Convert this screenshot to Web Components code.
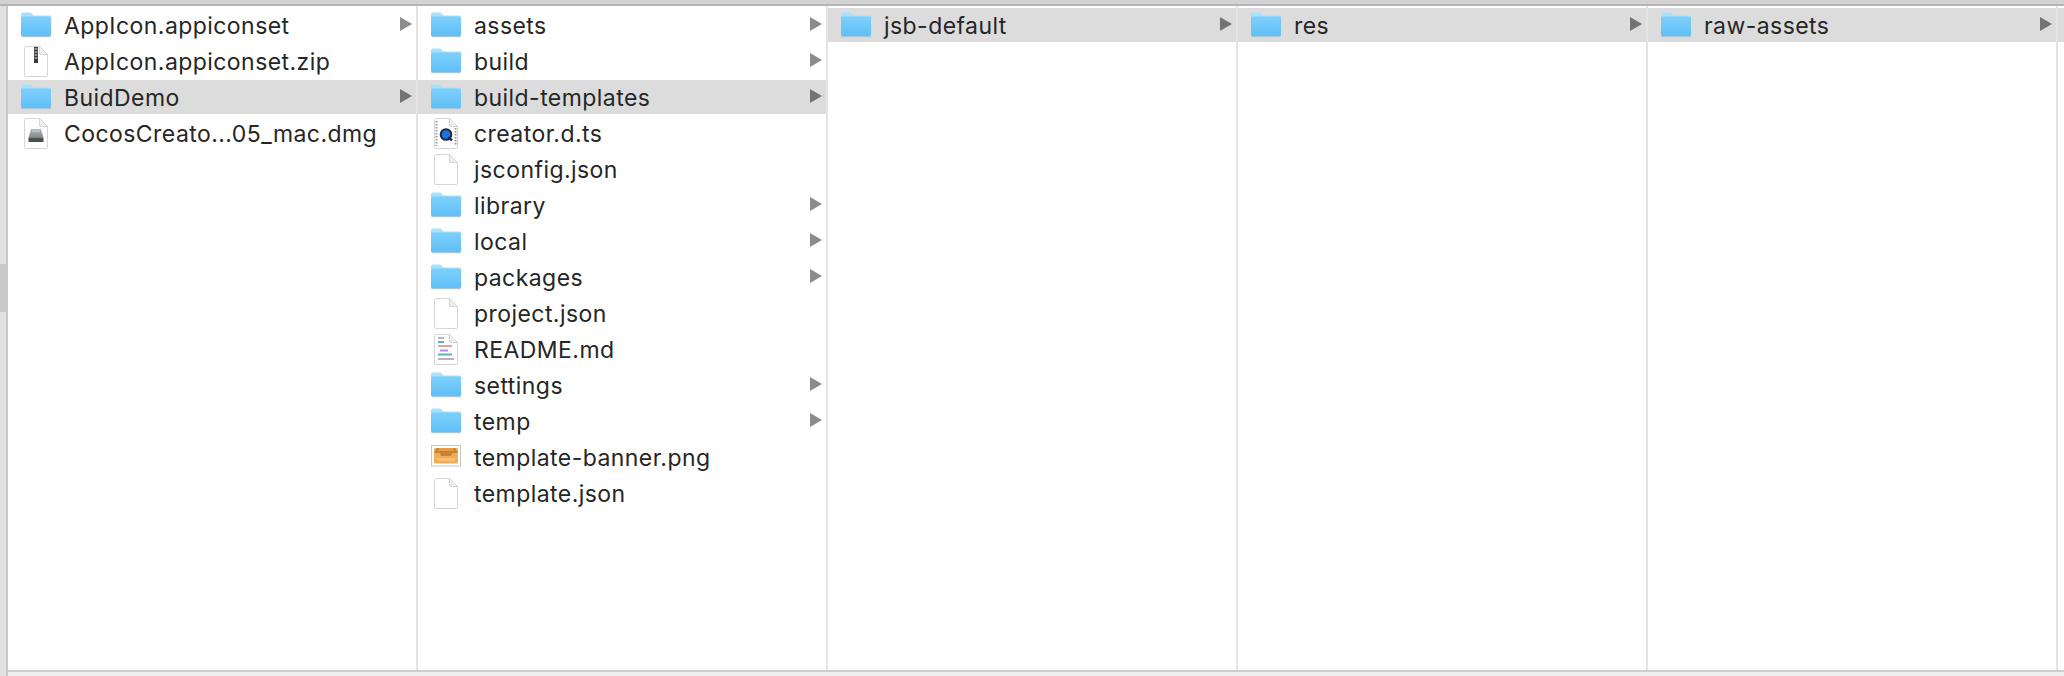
<!DOCTYPE html>
<html>
<head>
<meta charset="utf-8">
<title>Finder</title>
<style>
  html, body { margin: 0; padding: 0; height: 100%; background: #fff; overflow: hidden; }
</style>
</head>
<body>
<finder-window>
  <finder-column>
    <finder-row icon="folder" arrow>AppIcon.appiconset</finder-row>
    <finder-row icon="zip">AppIcon.appiconset.zip</finder-row>
    <finder-row icon="folder" arrow selected>BuidDemo</finder-row>
    <finder-row icon="dmg">CocosCreato...05_mac.dmg</finder-row>
  </finder-column>
  <finder-column>
    <finder-row icon="folder" arrow>assets</finder-row>
    <finder-row icon="folder" arrow>build</finder-row>
    <finder-row icon="folder" arrow selected>build-templates</finder-row>
    <finder-row icon="ts">creator.d.ts</finder-row>
    <finder-row icon="doc">jsconfig.json</finder-row>
    <finder-row icon="folder" arrow>library</finder-row>
    <finder-row icon="folder" arrow>local</finder-row>
    <finder-row icon="folder" arrow>packages</finder-row>
    <finder-row icon="doc">project.json</finder-row>
    <finder-row icon="md">README.md</finder-row>
    <finder-row icon="folder" arrow>settings</finder-row>
    <finder-row icon="folder" arrow>temp</finder-row>
    <finder-row icon="png">template-banner.png</finder-row>
    <finder-row icon="doc">template.json</finder-row>
  </finder-column>
  <finder-column>
    <finder-row icon="folder" arrow selected>jsb-default</finder-row>
  </finder-column>
  <finder-column>
    <finder-row icon="folder" arrow selected>res</finder-row>
  </finder-column>
  <finder-column>
    <finder-row icon="folder" arrow selected>raw-assets</finder-row>
  </finder-column>
  <finder-column>
    <finder-row selected></finder-row>
  </finder-column>
</finder-window>

<script>
// page corner shape shared by all the document icons
const sheet = `
  <path d="M1.5 .5H15.5L23.5 8.5V29a1.5 1.5 0 0 1-1.5 1.5H2A1.5 1.5 0 0 1 .5 29V2A1.5 1.5 0 0 1 1.5 .5Z" fill="#fff" stroke="#d6d6d6"/>
  <path d="M15.5 .5V7a1.5 1.5 0 0 0 1.5 1.5H23.5Z" fill="#efefef" stroke="#d6d6d6"/>`;

const ICONS = {
  folder: `<svg width="32" height="26" viewBox="0 0 32 26">
    <defs><linearGradient id="f" x1="0" y1="0" x2="0" y2="1"><stop offset="0" stop-color="#7ed0fb"/><stop offset="1" stop-color="#5fbff7"/></linearGradient></defs>
    <path d="M1 2.5A2 2 0 0 1 3 .5H10.5L13.5 3.5H29A2 2 0 0 1 31 5.5V22.5A1.5 1.5 0 0 1 29.5 24H2.5A1.5 1.5 0 0 1 1 22.5Z" fill="#a9e0fc"/>
    <path d="M1 5.5A1 1 0 0 1 2 4.5H29.7A1.3 1.3 0 0 1 31 5.8V22.5A1.5 1.5 0 0 1 29.5 24H2.5A1.5 1.5 0 0 1 1 22.5Z" fill="url(#f)"/>
    <path d="M1.5 24.6H30.5" stroke="#a7c6d8" stroke-width="1.2"/>
  </svg>`,
  doc: `<svg width="24" height="31" viewBox="0 0 24 31">${sheet}</svg>`,
  zip: `<svg width="24" height="31" viewBox="0 0 24 31">${sheet}
    <rect x="10" y="1" width="4" height="16" fill="#3a3a3a"/>
    <path d="M10.5 3H13.5M10.5 6H13.5M10.5 9H13.5M10.5 12H13.5" stroke="#ddd" stroke-width="1"/>
  </svg>`,
  dmg: `<svg width="24" height="31" viewBox="0 0 24 31">
    <defs><linearGradient id="d" x1="0" y1="0" x2="0" y2="1"><stop offset="0" stop-color="#b4b8bb"/><stop offset="1" stop-color="#7f8487"/></linearGradient></defs>
    ${sheet}
    <path d="M7 11H17L19.500 20H4.500Z" fill="url(#d)"/>
    <rect x="4.500" y="20" width="15" height="4" fill="#4b4f52"/>
    <path d="M8 13H16" stroke="#d2d5d7"/>
  </svg>`,
  ts: `<svg width="24" height="31" viewBox="0 0 24 31">${sheet}
    <path d="M2.500 3V28M21.500 10V28" stroke="#9a9a9a" stroke-width="2" stroke-dasharray="1.500 1.500"/>
    <circle cx="12" cy="16.500" r="5.300" fill="#1e74de" stroke="#1d2a3f" stroke-width="2"/>
    <path d="M14.500 19L18 22.500" stroke="#1d2a3f" stroke-width="2.400"/>
  </svg>`,
  md: `<svg width="24" height="31" viewBox="0 0 24 31">${sheet}
    <rect x="4" y="3" width="6" height="2" fill="#b5b5b5"/>
    <rect x="4" y="7" width="6" height="2" fill="#5cb1c0"/>
    <rect x="4" y="11" width="14" height="2" fill="#e0a0a6"/>
    <rect x="6" y="15.500" width="8" height="2" fill="#b08cf0"/>
    <rect x="4" y="19.500" width="14" height="2" fill="#5cb1c0"/>
    <rect x="4" y="24" width="16" height="2" fill="#b5b5b5"/>
  </svg>`,
  png: `<svg width="30" height="24" viewBox="0 0 30 24">
    <rect x=".5" y=".5" width="29" height="20.500" fill="#fff" stroke="#c6c6c6"/>
    <rect x="3" y="3" width="24" height="15.500" rx="1.500" fill="#f0ad55"/>
    <path d="M6 3H24L27 8H21L20 11H10L9 8H3Z" fill="#c98234"/>
    <path d="M8 3H22L23 6H7Z" fill="#e89c45"/>
    <rect x="6" y="13.500" width="18" height="2" fill="#f6c88f"/>
  </svg>`
};

class FinderWindow extends HTMLElement {
  connectedCallback() {
    const shadow = this.attachShadow({ mode: 'open' });
    shadow.innerHTML = `
      <style>
        :host {
          display: grid;
          grid-template-columns: 8px 1fr;
          grid-template-rows: 6px 1fr 6px;
          width: 2064px;
          height: 676px;
          font-family: Inter, "Liberation Sans", sans-serif;
        }
        .top { grid-column: 1 / 3; background: #d2d2d2; border-bottom: 2px solid #b4b4b4; box-sizing: border-box; }
        .gutter {
          grid-row: 2 / 4;
          box-sizing: border-box;
          background: #e1e1e1;
          border-right: 2px solid #c9c9c9;
          padding-top: 258px;
        }
        .thumb { height: 48px; width: 6px; background: #c9c9c9; }
        .columns { display: flex; background: #fff; overflow: hidden; min-width: 0; min-height: 0; }
        .bottom { background: #efefef; border-top: 2px solid #cdcdcd; box-sizing: border-box; }
      </style>
      <div class="top"></div>
      <div class="gutter"><div class="thumb"></div></div>
      <div class="columns"><slot></slot></div>
      <div class="bottom"></div>
    `;
  }
}

class FinderColumn extends HTMLElement {
  connectedCallback() {
    const shadow = this.attachShadow({ mode: 'open' });
    shadow.innerHTML = `
      <style>
        :host {
          display: flex;
          flex-direction: column;
          gap: 2px;
          flex: none;
          width: 408px;
          padding-top: 2px;
          border-right: 2px solid #e4e4e4;
        }
      </style>
      <slot></slot>
    `;
  }
}

class FinderRow extends HTMLElement {
  connectedCallback() {
    const shadow = this.attachShadow({ mode: 'open' });
    const icon = ICONS[this.getAttribute('icon')] || '';
    const arrow = this.hasAttribute('arrow')
      ? '<svg class="arrow" width="12" height="14" viewBox="0 0 12 14"><path d="M0 0L12 7L0 14Z"/></svg>'
      : '';
    shadow.innerHTML = `
      <style>
        :host {
          display: flex;
          align-items: center;
          height: 34px;
          flex: none;
          color: #262626;
          font-size: 23px;
          letter-spacing: 0.44px;
        }
        :host([selected]) { background: #dcdcdc; }
        .icon { width: 32px; margin-left: 12px; display: flex; justify-content: center; flex: none; }
        .label { margin-left: 12px; padding-top: 2px; flex: 1; white-space: nowrap; }
        .arrow { fill: #8c8c8c; margin: 0 4px 2px 0; flex: none; }
        :host([selected]) .arrow { fill: #737373; }
      </style>
      <span class="icon">${icon}</span>
      <span class="label"><slot></slot></span>
      ${arrow}
    `;
  }
}

customElements.define('finder-window', FinderWindow);
customElements.define('finder-column', FinderColumn);
customElements.define('finder-row', FinderRow);
</script>
</body>
</html>
